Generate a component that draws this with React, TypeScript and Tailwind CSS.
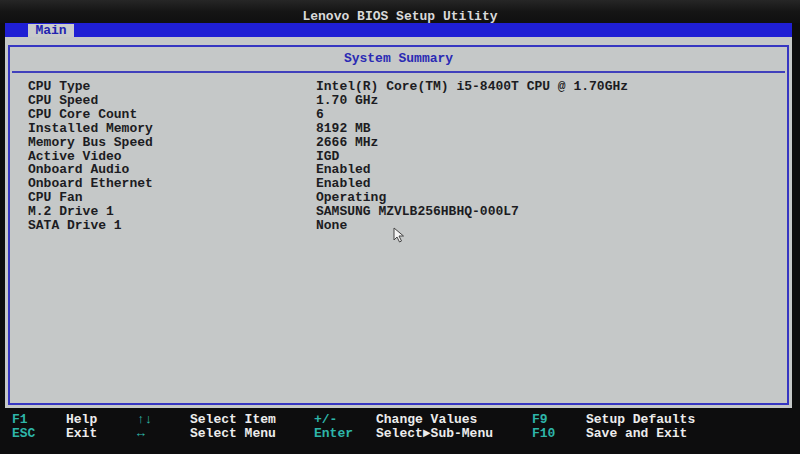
import { Fragment } from "react";

const rows: [string, string][] = [
  ["CPU Type", "Intel(R) Core(TM) i5-8400T CPU @ 1.70GHz"],
  ["CPU Speed", "1.70 GHz"],
  ["CPU Core Count", "6"],
  ["Installed Memory", "8192 MB"],
  ["Memory Bus Speed", "2666 MHz"],
  ["Active Video", "IGD"],
  ["Onboard Audio", "Enabled"],
  ["Onboard Ethernet", "Enabled"],
  ["CPU Fan", "Operating"],
  ["M.2 Drive 1", "SAMSUNG MZVLB256HBHQ-000L7"],
  ["SATA Drive 1", "None"],
];

const keys: [string, string][][] = [
  [["F1", "Help"], ["↑↓", "Select Item"], ["+/-", "Change Values"], ["F9", "Setup Defaults"]],
  [["ESC", "Exit"], ["↔", "Select Menu"], ["Enter", "Select►Sub-Menu"], ["F10", "Save and Exit"]],
];

export default function App() {
  return (
    <div className="relative w-[800px] h-[454px] overflow-hidden bg-[#0d0d0e] font-['Liberation_Mono','DejaVu_Sans_Mono',monospace] font-bold text-[13px]">
      {/* title */}
      <div className="h-[23px] pt-[10px] bg-gradient-to-b from-[#262626] via-[#151515] to-[#0f0f10] text-center leading-[13px] text-[#d9d9d9]">
        Lenovo BIOS Setup Utility
      </div>

      {/* tab bar */}
      <div className="ml-[5px] mr-[8px] h-[14px] bg-[#1f1fd4] pl-[23px] flex">
        <div className="mt-[1px] h-[13px] w-[46px] bg-[#c9cbcb] text-[#2323b0] leading-[14px] text-center">Main</div>
      </div>

      {/* main panel */}
      <div className="ml-[5px] mr-[8px] h-[371px] bg-[#c5c8c8] pt-[8px] pl-[3px] pr-[3px] pb-[3px]">
        <div className="h-full border-2 border-[#3636c2] flex flex-col">
          <div className="h-[26px] mx-[2px] border-b-2 border-[#4040bc] flex items-center justify-center text-[#2a2ab4]">
            System Summary
          </div>
          <div className="pt-[7px] pl-[18px] leading-[13.9px] text-[#1c1c22]">
            {rows.map(([k, v]) => (
              <div key={k} className="flex">
                <div className="w-[288px]">{k}</div>
                <div>{v}</div>
              </div>
            ))}
          </div>
        </div>
      </div>

      {/* footer */}
      <div className="pt-[5px] pl-[12px] leading-[14px]">
        {keys.map((row, i) => (
          <div key={i} className="grid grid-cols-[54px_71px_53px_124px_62px_156px_54px_1fr]">
            {row.map(([k, d]) => (
              <Fragment key={k}>
                <div className="text-[#2eb5a9]">{k}</div>
                <div className="text-[#ececec]">{d}</div>
              </Fragment>
            ))}
          </div>
        ))}
      </div>

      {/* mouse pointer */}
      <svg className="absolute left-[393px] top-[227px]" width="12" height="16" viewBox="0 0 12 16">
        <path d="M1 1 L1 13 L4 10 L6.5 15 L8.5 14 L6 9 L10.5 9 Z" fill="#f4f4f4" stroke="#444" strokeWidth="1" />
      </svg>
    </div>
  );
}
